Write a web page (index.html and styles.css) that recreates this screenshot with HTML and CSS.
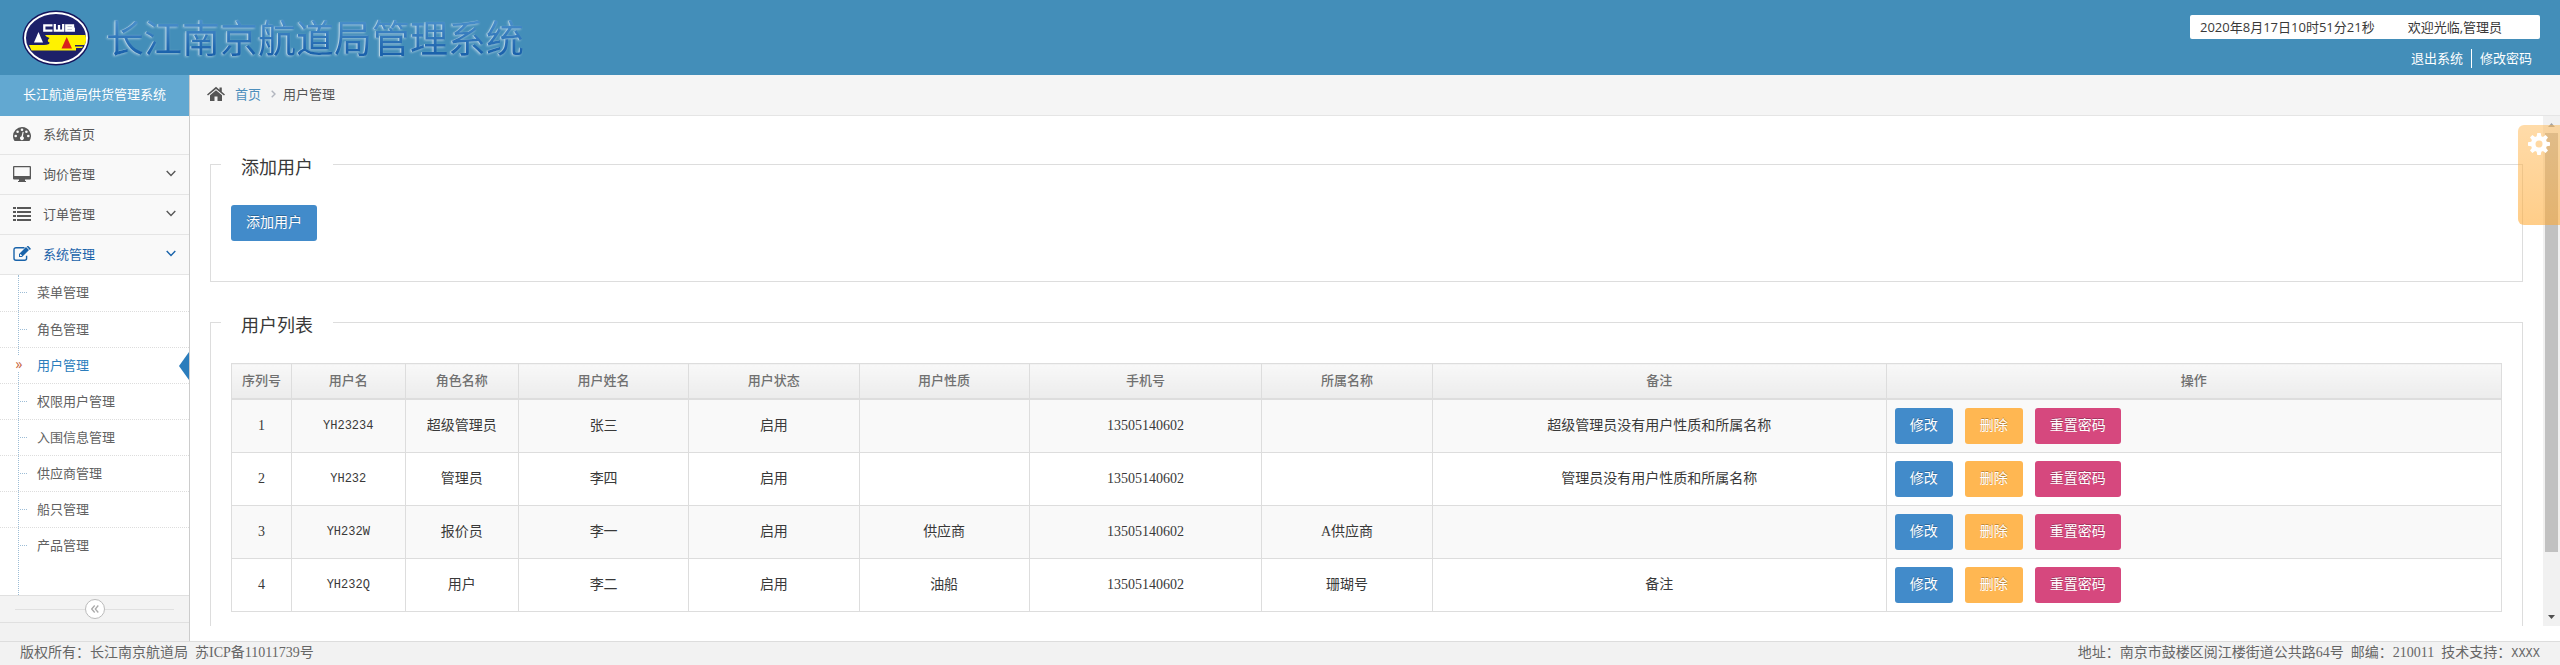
FILE: index.html
```html
<!DOCTYPE html>
<html lang="zh-CN">
<head>
<meta charset="utf-8">
<title>长江南京航道局管理系统</title>
<link rel="stylesheet" href="styles.css">
</head>
<body>
<header class="topbar">
  <div class="brand">
    <svg class="brand-logo" viewBox="0 0 68 56" aria-hidden="true">
      <ellipse cx="34" cy="28" rx="33.5" ry="27.5" fill="#14145c"/>
      <ellipse cx="34" cy="28" rx="31" ry="25" fill="#1d2069" stroke="#fff" stroke-width="2"/>
      <path d="M23 25H63.500Q65 31 62.500 35H53V36.500H61L60 38H54V40.500H9.500L7 35H22Q28 34.500 27.500 32.500Q24 31 27.500 28Q24 27 23 25Z" fill="#fff200"/>
      <path d="M16.500 22L21 32.500H12Z" fill="#fff"/>
      <path d="M44.700 27L50 38.500H39.500Z" fill="#d8231c"/>
      <path d="M30.500 15.300H22.300V20.700H30.500M32.800 14V20.700H41.200V14M37 15V21M44.300 15.300H51V20.700H44.300ZM44 18H52.500M51.800 18V21.800" fill="none" stroke="#fff" stroke-width="2.300"/>
    </svg>
    <h1 class="brand-title">长江南京航道局管理系统</h1>
  </div>
  <div class="account">
    <div class="account-info"><time>2020年8月17日10时51分21秒</time><span>欢迎光临,管理员</span></div>
    <nav class="account-links"><a href="#">退出系统</a><a href="#">修改密码</a></nav>
  </div>
</header>

<div class="shell">
  <aside class="sidebar">
    <div class="sidebar-title">长江航道局供货管理系统</div>
    <nav>
      <a class="menu-item" href="#">
        <svg class="icon" viewBox="0 0 18 16"><path fill="currentColor" d="M9 1a9 9 0 0 0-9 9c0 1.800.5 3.500 1.400 4.700.1.200.3.300.6.300h14c.3 0 .5-.1.600-.3A9 9 0 0 0 9 1z"/><g fill="#f9f9f9"><circle cx="2.700" cy="10" r="1.300"/><circle cx="4.600" cy="5.700" r="1.300"/><circle cx="9" cy="3.800" r="1.300"/><circle cx="13.400" cy="5.700" r="1.300"/><circle cx="15.300" cy="10" r="1.300"/><path d="M9.700 5.800l1 .3-.8 4.300a2 2 0 1 1-1.400-.2z"/></g></svg>
        <span>系统首页</span>
      </a>
      <a class="menu-item" href="#">
        <svg class="icon" viewBox="0 0 18 16"><path fill="currentColor" fill-rule="evenodd" d="M1 0h16a1 1 0 0 1 1 1v11.500a1 1 0 0 1-1 1h-5V15h1v1H5v-1h1v-1.500H1a1 1 0 0 1-1-1V1a1 1 0 0 1 1-1zm.3 1.300V10h15.400V1.300z"/></svg>
        <span>询价管理</span>
        <svg class="caret" viewBox="0 0 10 7"><path d="M.7 1L5 5.500 9.300 1"/></svg>
      </a>
      <a class="menu-item" href="#">
        <svg class="icon" viewBox="0 0 18 16"><path fill="currentColor" d="M0 1h3v2H0zM4 1h14v2H4zM0 5h3v2H0zM4 5h14v2H4zM0 9h3v2H0zM4 9h14v2H4zM0 13h3v2H0zM4 13h14v2H4z"/></svg>
        <span>订单管理</span>
        <svg class="caret" viewBox="0 0 10 7"><path d="M.7 1L5 5.500 9.300 1"/></svg>
      </a>
      <a class="menu-item menu-item-open" href="#">
        <svg class="icon" viewBox="0 0 18 16"><path fill="none" stroke="currentColor" stroke-width="1.400" d="M11.500 1.700H3a2 2 0 0 0-2 2v8.600a2 2 0 0 0 2 2h8.600a2 2 0 0 0 2-2V9.800"/><path fill="currentColor" fill-rule="evenodd" d="M6 8l7-7 3 3-7 7H6zm1 .5V10h1.500l.6-.6-1.500-1.500zM13.700.6l.8-.6h.8L17.700 2.500v.8l-.9.800z"/></svg>
        <span>系统管理</span>
        <svg class="caret" viewBox="0 0 10 7"><path d="M.7 1L5 5.500 9.300 1"/></svg>
      </a>
      <ul class="submenu">
        <li><a href="#">菜单管理</a></li>
        <li><a href="#">角色管理</a></li>
        <li class="current"><a href="#" aria-current="page">用户管理</a></li>
        <li><a href="#">权限用户管理</a></li>
        <li><a href="#">入围信息管理</a></li>
        <li><a href="#">供应商管理</a></li>
        <li><a href="#">船只管理</a></li>
        <li><a href="#">产品管理</a></li>
      </ul>
    </nav>
    <div class="collapse">
      <button class="collapse-button" type="button" aria-label="收起菜单"><svg viewBox="0 0 8 8"><path d="M3.700.5L.7 4l3 3.500M7.300.5l-3 3.500 3 3.500"/></svg></button>
    </div>
  </aside>

  <main class="main">
    <nav class="breadcrumb">
      <svg class="home" viewBox="0 0 18 16"><path fill="currentColor" d="M9 4.200l6 5V15h-4.500v-4.500h-3V15H3V9.200zM9 .8l3.500 3V1.500h2.300v4.200L18 8.400l-1 1.200-8-6.700-8 6.700L0 8.400z"/></svg>
      <a href="#">首页</a>
      <svg class="crumb-sep" viewBox="0 0 5 8"><path d="M.7.7L4 4 .7 7.300"/></svg>
      <span>用户管理</span>
    </nav>

    <div class="viewport">
      <div class="content">
        <fieldset class="panel">
          <legend>添加用户</legend>
          <button class="btn btn-add" type="button">添加用户</button>
        </fieldset>
        <fieldset class="panel panel-list">
          <legend>用户列表</legend>
          <table class="users">
            <colgroup><col class="w-index"><col class="w-small"><col class="w-small"><col class="w-mid"><col class="w-mid"><col class="w-mid"><col class="w-phone"><col class="w-mid"><col class="w-note"><col></colgroup>
            <thead>
              <tr><th>序列号</th><th>用户名</th><th>角色名称</th><th>用户姓名</th><th>用户状态</th><th>用户性质</th><th>手机号</th><th>所属名称</th><th>备注</th><th>操作</th></tr>
            </thead>
            <tbody>
              <tr><td>1</td><td><span class="code">YH23234</span></td><td>超级管理员</td><td>张三</td><td>启用</td><td></td><td>13505140602</td><td></td><td>超级管理员没有用户性质和所属名称</td><td><div class="actions"><button class="btn" type="button">修改</button><button class="btn btn-delete" type="button">删除</button><button class="btn btn-reset" type="button">重置密码</button></div></td></tr>
              <tr><td>2</td><td><span class="code">YH232</span></td><td>管理员</td><td>李四</td><td>启用</td><td></td><td>13505140602</td><td></td><td>管理员没有用户性质和所属名称</td><td><div class="actions"><button class="btn" type="button">修改</button><button class="btn btn-delete" type="button">删除</button><button class="btn btn-reset" type="button">重置密码</button></div></td></tr>
              <tr><td>3</td><td><span class="code">YH232W</span></td><td>报价员</td><td>李一</td><td>启用</td><td>供应商</td><td>13505140602</td><td>A供应商</td><td></td><td><div class="actions"><button class="btn" type="button">修改</button><button class="btn btn-delete" type="button">删除</button><button class="btn btn-reset" type="button">重置密码</button></div></td></tr>
              <tr><td>4</td><td><span class="code">YH232Q</span></td><td>用户</td><td>李二</td><td>启用</td><td>油船</td><td>13505140602</td><td>珊瑚号</td><td>备注</td><td><div class="actions"><button class="btn" type="button">修改</button><button class="btn btn-delete" type="button">删除</button><button class="btn btn-reset" type="button">重置密码</button></div></td></tr>
            </tbody>
          </table>
        </fieldset>
      </div>
      <div class="scrollbar" aria-hidden="true">
        <svg class="arrow arrow-up" viewBox="0 0 17 17"><path d="M5 11h7L8.500 7z"/></svg>
        <div class="track"><div class="thumb"></div></div>
        <svg class="arrow" viewBox="0 0 17 17"><path d="M5 6h7L8.500 10z"/></svg>
      </div>
      <button class="settings" type="button" aria-label="设置">
        <svg viewBox="0 0 22 22"><path fill="#fff" fill-rule="evenodd" d="M9.300 0h3.400l.6 3.200 1.600.7 2.700-1.900 2.400 2.400-1.900 2.700.7 1.600 3.200.6v3.400l-3.200.6-.7 1.600 1.900 2.700-2.400 2.400-2.700-1.900-1.600.7-.6 3.200H9.300l-.6-3.200-1.600-.7L4.400 20 2 17.600l1.900-2.700-.7-1.600L0 12.700V9.300l3.200-.6.7-1.600L2 4.400 4.400 2l2.700 1.900 1.600-.7zM11 7.500a3.500 3.500 0 1 0 0 7 3.500 3.500 0 0 0 0-7z"/></svg>
      </button>
    </div>
  </main>
</div>

<footer class="footer">
  <p><span>版权所有：长江南京航道局</span><span>苏ICP备11011739号</span></p>
  <p><span>地址：南京市鼓楼区阅江楼街道公共路64号</span><span>邮编：210011</span><span>技术支持：<span class="code">XXXX</span></span></p>
</footer>
</body>
</html>
```
FILE: styles.css
```css
* { box-sizing: border-box; }

body {
  margin: 0;
  height: 100vh;
  display: flex;
  flex-direction: column;
  overflow: hidden;
  background: #fff;
  color: #393939;
  font: 13px/20px "Open Sans", "Noto Sans CJK SC", sans-serif;
}

h1, p, ul { margin: 0; padding: 0; }
a { color: inherit; text-decoration: none; }
button { font: inherit; cursor: pointer; }
svg { display: block; flex: none; }

/* Top bar */
.topbar {
  flex: none;
  height: 75px;
  padding: 0 20px 0 22px;
  display: flex;
  justify-content: space-between;
  background: #438eb9;
}
.brand { display: flex; align-items: center; gap: 16px; }
.brand-logo { width: 68px; height: 56px; }
.brand-title {
  padding-bottom: 2px;
  font-size: 38px;
  line-height: 56px;
  font-weight: 400;
  color: transparent;
  background: linear-gradient(#4a8fcb 20%, #1b62ac 75%);
  background-clip: text;
  -webkit-background-clip: text;
  filter: drop-shadow(-1px 0 0 rgba(255, 255, 255, .4)) drop-shadow(-1px 1px 1px rgba(255, 255, 255, .45));
}
.account { padding-top: 15px; display: flex; flex-direction: column; align-items: flex-end; gap: 10px; }
.account-info {
  width: 350px;
  height: 24px;
  padding: 2px 10px;
  display: flex;
  gap: 33px;
  border-radius: 2px;
  background: #fff;
}
.account-links { display: flex; color: #fff; line-height: 19px; }
.account-links a { padding: 0 8px; }
.account-links a + a { border-left: 1px solid #fff; }

/* Sidebar */
.shell { flex: 1; min-height: 0; display: flex; }
.sidebar {
  flex: none;
  width: 190px;
  border-right: 1px solid #ccc;
  background: #f2f2f2;
}
.sidebar-title {
  height: 41px;
  line-height: 39px;
  text-align: center;
  color: #fff;
  background: #62a8d1;
}
.menu-item {
  height: 40px;
  padding: 0 13px 2px;
  display: flex;
  align-items: center;
  gap: 12px;
  border-bottom: 1px solid #e5e5e5;
  background: #f9f9f9;
  color: #585858;
}
.menu-item:first-child { height: 39px; }
.menu-item-open { color: #1963aa; }
.icon { width: 18px; height: 16px; }
.caret { width: 10px; height: 7px; margin-left: auto; }
.caret path, .crumb-sep path { fill: none; stroke: currentColor; stroke-width: 1.4; }

.submenu {
  position: relative;
  height: 320px;
  list-style: none;
  background: #fff;
  color: #616161;
}
.submenu::before {
  content: "";
  position: absolute;
  top: 0;
  bottom: 0;
  left: 18px;
  border-left: 1px dotted #9dbdd6;
}
.submenu li {
  position: relative;
  height: 36px;
  padding-left: 37px;
  line-height: 34px;
}
.submenu li + li { border-top: 1px dotted #ddd; }
.submenu a { display: block; }
.submenu li::before {
  content: "";
  position: absolute;
  left: 20px;
  top: 17px;
  width: 7px;
  border-top: 1px dotted #9dbdd6;
}
.submenu .current { color: #2b7dbc; }
.submenu .current::before {
  content: "»";
  left: 14px;
  top: 8px;
  width: 10px;
  border: 0;
  background: #fff;
  color: #c86139;
  font-size: 14px;
  line-height: 16px;
  text-align: center;
}
.submenu .current::after {
  content: "";
  position: absolute;
  right: 0;
  top: 4px;
  border: solid transparent;
  border-width: 14px 10px 14px 0;
  border-right-color: #2b7dbc;
}

.collapse {
  height: 28px;
  display: flex;
  align-items: center;
  padding: 0 15px;
  border: solid #e0e0e0;
  border-width: 1px 0;
  background: #f3f3f3;
}
.collapse::before, .collapse::after { content: ""; flex: 1; border-top: 1px solid #e0e0e0; }
.collapse-button {
  width: 20px;
  height: 20px;
  padding: 0;
  display: grid;
  place-items: center;
  border: 1px solid #bbb;
  border-radius: 50%;
  background: #fff;
}
.collapse-button svg { width: 8px; height: 8px; }
.collapse-button path { fill: none; stroke: #aaa; stroke-width: 1.3; }

/* Main column */
.main { flex: 1; min-width: 0; display: flex; flex-direction: column; padding-bottom: 15px; }
.breadcrumb {
  flex: none;
  height: 41px;
  padding: 0 17px 2px;
  display: flex;
  align-items: center;
  border-bottom: 1px solid #e5e5e5;
  background: #f5f5f5;
  color: #555;
}
.breadcrumb a { margin: 0 10px; color: #4c8fbd; }
.home { width: 18px; height: 16px; }
.crumb-sep { width: 5px; height: 8px; margin-right: 7px; color: #b2b6bf; }

.viewport { position: relative; flex: 1; min-height: 0; display: flex; }
.content { flex: 1; min-width: 0; padding: 30px 20px 0; overflow: hidden; }

.panel {
  min-width: 0;
  margin: 0 0 22px;
  padding: 23px 20px 40px;
  border: 1px solid #ddd;
}
.panel legend {
  margin-left: -10px;
  padding: 8px 20px 2px;
  font-size: 18px;
  line-height: 26px;
}
.panel-list { min-height: 340px; }

.btn {
  display: block;
  height: 36px;
  padding: 0 15px 2px;
  border: 0;
  border-radius: 3px;
  background: #428bca;
  color: #fff;
  font-size: 14px;
  text-shadow: 0 -1px 0 rgba(0, 0, 0, .25);
}
.btn-delete { background: #ffb752; }
.btn-reset { background: #d6487e; }

/* Users table */
.users { width: 100%; table-layout: fixed; border-collapse: collapse; }
.w-index { width: 60px; }
.w-small { width: 5%; }
.w-mid { width: 7.5%; }
.w-phone { width: 10.25%; }
.w-note { width: 20%; }
.users th, .users td { border: 1px solid #ddd; text-align: center; }
.users th {
  height: 35px;
  padding: 0 0 2px;
  border-bottom-width: 2px;
  background: linear-gradient(#f8f8f8, #ececec);
  color: #707070;
  font-weight: 500;
}
.users td { height: 53px; padding: 8px; }
.users td, .footer { font-family: "Liberation Serif", "Noto Sans CJK SC", serif; font-size: 14px; }
.users tbody tr:nth-child(odd) { background: #f9f9f9; }
.users .code, .footer .code { font-family: "Liberation Mono", monospace; font-size: 12px; }
.actions { display: flex; gap: 12px; font-family: "Open Sans", "Noto Sans CJK SC", sans-serif; }

/* Scroll bar */
.scrollbar { flex: none; width: 17px; display: flex; flex-direction: column; background: #f1f1f1; }
.track { flex: 1; }
.thumb { height: 88%; margin: 0 2px; background: #c1c1c1; }
.arrow { width: 17px; height: 17px; fill: #505050; }
.arrow-up { fill: #a3a3a3; }

.settings {
  position: absolute;
  right: 0;
  top: 9px;
  width: 42px;
  height: 100px;
  padding: 8px 10px;
  display: flex;
  align-items: flex-start;
  border: 0;
  border-radius: 6px 0 0 6px;
  background: linear-gradient(rgba(255, 184, 84, .5), rgba(255, 168, 48, .57));
}
.settings svg { width: 22px; height: 22px; }

/* Footer */
.footer {
  flex: none;
  height: 24px;
  padding: 0 20px;
  display: flex;
  justify-content: space-between;
  border-top: 1px solid #ddd;
  background: #f2f2f2;
  color: #666;
  line-height: 22px;
}
.footer p { display: flex; gap: 7px; }
```
